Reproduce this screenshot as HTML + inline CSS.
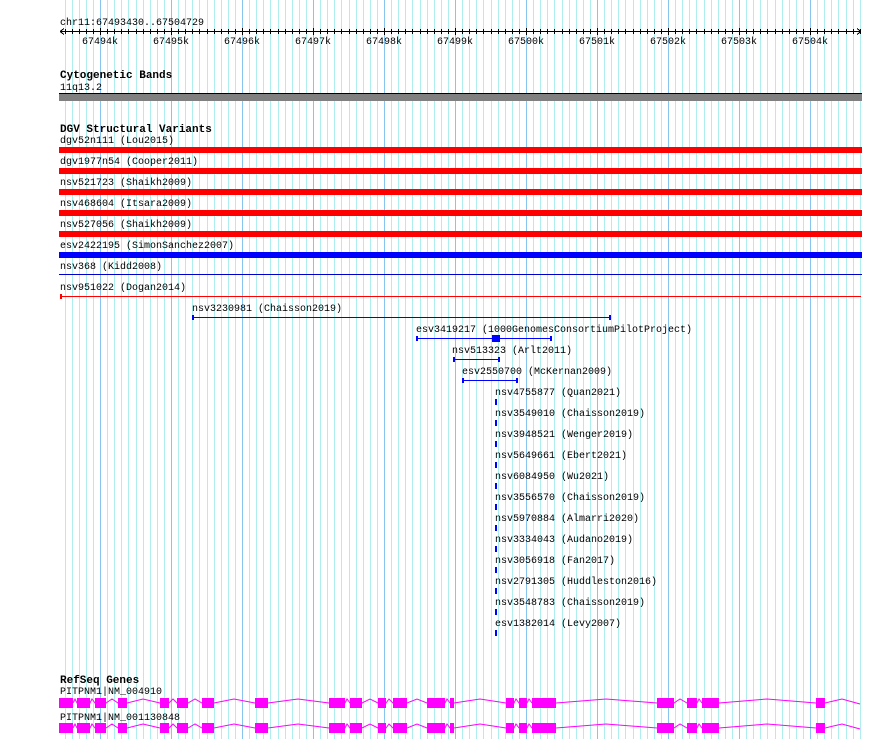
<!DOCTYPE html>
<html><head><meta charset="utf-8"><style>
html,body{margin:0;padding:0;background:#fff;}
svg{display:block;}
text{font-family:"Liberation Mono",monospace;font-size:10px;fill:#000;}
.b{font-weight:bold;font-size:11px;}
</style></head><body>
<svg id="s" width="890" height="739" viewBox="0 0 890 739" xmlns="http://www.w3.org/2000/svg" shape-rendering="crispEdges">
<g id="grid"></g>
<!-- ruler -->
<text x="60" y="25">chr11:67493430..67504729</text>
<rect x="60" y="31" width="801" height="1" fill="#000"/>
<g id="ticks" fill="#000"></g>
<path d="M60 31.5 L64 28.5 M60 31.5 L64 34.5 M861 31.5 L857 28.5 M861 31.5 L857 34.5" stroke="#000" fill="none"/>
<g>
<text x="82" y="44">67494k</text><text x="153" y="44">67495k</text><text x="224" y="44">67496k</text><text x="295" y="44">67497k</text><text x="366" y="44">67498k</text><text x="437" y="44">67499k</text><text x="508" y="44">67500k</text><text x="579" y="44">67501k</text><text x="650" y="44">67502k</text><text x="721" y="44">67503k</text><text x="792" y="44">67504k</text>
</g>
<!-- cytobands -->
<text class="b" x="60" y="78">Cytogenetic Bands</text>
<text x="60" y="90">11q13.2</text>
<rect x="59" y="93" width="803" height="1" fill="#000"/>
<rect x="59" y="94" width="803" height="7" fill="#808080"/>
<!-- DGV -->
<text class="b" x="60" y="132">DGV Structural Variants</text>
<text x="60" y="143">dgv52n111 (Lou2015)</text>
<rect x="59" y="147" width="803" height="6" fill="#f00"/>
<text x="60" y="164">dgv1977n54 (Cooper2011)</text>
<rect x="59" y="168" width="803" height="6" fill="#f00"/>
<text x="60" y="185">nsv521723 (Shaikh2009)</text>
<rect x="59" y="189" width="803" height="6" fill="#f00"/>
<text x="60" y="206">nsv468604 (Itsara2009)</text>
<rect x="59" y="210" width="803" height="6" fill="#f00"/>
<text x="60" y="227">nsv527056 (Shaikh2009)</text>
<rect x="59" y="231" width="803" height="6" fill="#f00"/>
<text x="60" y="248">esv2422195 (SimonSanchez2007)</text>
<rect x="59" y="252" width="803" height="6" fill="#00f"/>
<text x="60" y="269">nsv368 (Kidd2008)</text>
<rect x="59" y="274" width="803" height="1" fill="#00c"/>
<text x="60" y="290">nsv951022 (Dogan2014)</text>
<rect x="60" y="296" width="801" height="1" fill="#f00"/>
<rect x="60" y="294" width="2" height="5" fill="#f00"/>
<text x="192" y="311">nsv3230981 (Chaisson2019)</text>
<rect x="192" y="317" width="418" height="1" fill="#00f"/>
<rect x="192" y="315" width="2" height="5" fill="#00f"/><rect x="609" y="315" width="2" height="5" fill="#00f"/>
<text x="416" y="332">esv3419217 (1000GenomesConsortiumPilotProject)</text>
<rect x="416" y="338" width="135" height="1" fill="#00f"/>
<rect x="416" y="336" width="2" height="5" fill="#00f"/><rect x="550" y="336" width="2" height="5" fill="#00f"/>
<rect x="492" y="335" width="8" height="7" fill="#00f"/>
<text x="452" y="353">nsv513323 (Arlt2011)</text>
<rect x="453" y="359" width="46" height="1" fill="#00f"/>
<rect x="453" y="357" width="2" height="5" fill="#00f"/><rect x="498" y="357" width="2" height="5" fill="#00f"/>
<text x="462" y="374">esv2550700 (McKernan2009)</text>
<rect x="462" y="380" width="55" height="1" fill="#00f"/>
<rect x="462" y="378" width="2" height="5" fill="#00f"/><rect x="516" y="378" width="2" height="5" fill="#00f"/>
<g fill="#00f">
<rect x="495" y="399" width="2" height="6"/><rect x="495" y="420" width="2" height="6"/><rect x="495" y="441" width="2" height="6"/><rect x="495" y="462" width="2" height="6"/><rect x="495" y="483" width="2" height="6"/><rect x="495" y="504" width="2" height="6"/><rect x="495" y="525" width="2" height="6"/><rect x="495" y="546" width="2" height="6"/><rect x="495" y="567" width="2" height="6"/><rect x="495" y="588" width="2" height="6"/><rect x="495" y="609" width="2" height="6"/><rect x="495" y="630" width="2" height="6"/>
</g>
<text x="495" y="395">nsv4755877 (Quan2021)</text>
<text x="495" y="416">nsv3549010 (Chaisson2019)</text>
<text x="495" y="437">nsv3948521 (Wenger2019)</text>
<text x="495" y="458">nsv5649661 (Ebert2021)</text>
<text x="495" y="479">nsv6084950 (Wu2021)</text>
<text x="495" y="500">nsv3556570 (Chaisson2019)</text>
<text x="495" y="521">nsv5970884 (Almarri2020)</text>
<text x="495" y="542">nsv3334043 (Audano2019)</text>
<text x="495" y="563">nsv3056918 (Fan2017)</text>
<text x="495" y="584">nsv2791305 (Huddleston2016)</text>
<text x="495" y="605">nsv3548783 (Chaisson2019)</text>
<text x="495" y="626">esv1382014 (Levy2007)</text>
<!-- RefSeq -->
<text class="b" x="60" y="683">RefSeq Genes</text>
<text x="60" y="694">PITPNM1|NM_004910</text>
<text x="60" y="720">PITPNM1|NM_001130848</text>
<g id="gene">
<polyline fill="none" stroke="#f0f" stroke-width="1" shape-rendering="auto" points="73,703 75,699 77,703 90,703 92,699 95,703 106,703 112,699 118,703 127,703 143,699 160,703 169,703 173,699 177,703 188,703 195,699 202,703 214,703 234,699 255,703 268,703 298,699 329,703 345,703 347,699 350,703 362,703 370,699 378,703 386,703 389,699 393,703 407,703 417,699 427,703 445,703 447,699 450,703 454,703 480,699 506,703 514,703 516,699 519,703 527,703 529,699 532,703 556,703 606,699 657,703 674,703 680,699 687,703 697,703 699,699 702,703 719,703 767,699 816,703 825,703 842,699 860,704"/>
<g fill="#f0f">
<rect x="59" y="698" width="14" height="10"/><rect x="77" y="698" width="13" height="10"/><rect x="95" y="698" width="11" height="10"/><rect x="118" y="698" width="9" height="10"/><rect x="160" y="698" width="9" height="10"/><rect x="177" y="698" width="11" height="10"/><rect x="202" y="698" width="12" height="10"/><rect x="255" y="698" width="13" height="10"/><rect x="329" y="698" width="16" height="10"/><rect x="350" y="698" width="12" height="10"/><rect x="378" y="698" width="8" height="10"/><rect x="393" y="698" width="14" height="10"/><rect x="427" y="698" width="18" height="10"/><rect x="450" y="698" width="4" height="10"/><rect x="506" y="698" width="8" height="10"/><rect x="519" y="698" width="8" height="10"/><rect x="532" y="698" width="24" height="10"/><rect x="657" y="698" width="17" height="10"/><rect x="687" y="698" width="10" height="10"/><rect x="702" y="698" width="17" height="10"/><rect x="816" y="698" width="9" height="10"/>
</g>
</g>
<use href="#gene" x="0" y="25"/>
</svg>
<script>
(function(){
var ns="http://www.w3.org/2000/svg";
var g=document.getElementById("grid"),t=document.getElementById("ticks");
for(var n=-6;n<=110;n++){
  var x=Math.round(100+n*7.1);
  if(x<60||x>861)continue;
  var major=(n%10===0);
  var r=document.createElementNS(ns,"rect");
  r.setAttribute("x",x);r.setAttribute("y",0);r.setAttribute("width",1);r.setAttribute("height",739);
  r.setAttribute("fill",major?"#87c4ee":"#aeeeee");
  g.appendChild(r);
  var k=document.createElementNS(ns,"rect");
  k.setAttribute("x",x);k.setAttribute("y",major?28:29);k.setAttribute("width",1);k.setAttribute("height",major?7:5);
  t.appendChild(k);
}
})();
</script>
</body></html>
